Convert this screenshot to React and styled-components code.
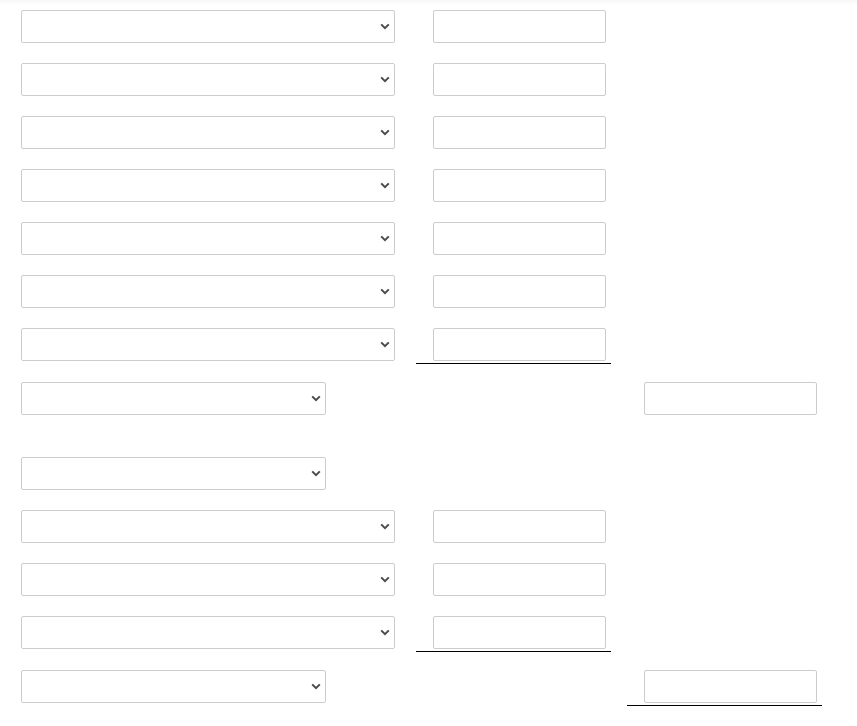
import React from "react";
import styled, { createGlobalStyle } from "styled-components";

const GlobalStyle = createGlobalStyle`
    html, body {
        margin: 0;
        background: #fff;
        font-family: "Liberation Sans", Arial, sans-serif;
    }
`;

const TopShade = styled.div`
    position: fixed;
    top: 0;
    left: 0;
    right: 0;
    height: 0;
    box-shadow: 0 0 5px 1px rgba(0, 0, 0, 0.1);
`;

const Form = styled.div`
    padding: 10px 0 0 4px;
`;

const Row = styled.div`
    display: grid;
    grid-template-columns: 396px 195px 195px;
    column-gap: 16px;
    align-items: start;
    margin-bottom: ${(props) => props.$after}px;

    &:last-child {
        margin-bottom: 0;
    }
`;

const Cell = styled.div`
    grid-column: ${(props) => props.$col};
    padding: 0 5px ${(props) => (props.$total ? "2px" : "0")} 17px;
    border-bottom: ${(props) => (props.$total ? "1px solid #000" : "none")};
    display: flex;
`;

const SelectWrap = styled.div`
    position: relative;
    width: ${(props) => (props.$short ? "305px" : "100%")};
    height: 33px;
`;

const Select = styled.select`
    box-sizing: border-box;
    appearance: none;
    -webkit-appearance: none;
    width: 100%;
    height: 33px;
    margin: 0;
    padding: 0 24px 0 8px;
    border: 1px solid #cccccc;
    border-radius: 2px;
    background: #fff;
    color: #444;
    font-family: "Liberation Sans", Arial, sans-serif;
    font-size: 14px;
`;

const Chevron = styled.svg`
    position: absolute;
    right: 5px;
    top: 13px;
    width: 10px;
    height: 7px;
    pointer-events: none;
`;

const Input = styled.input`
    box-sizing: border-box;
    width: 100%;
    height: 33px;
    margin: 0;
    padding: 0 8px;
    border: 1px solid #cccccc;
    border-radius: 2px;
    background: #fff;
    font-family: "Liberation Sans", Arial, sans-serif;
    font-size: 14px;
`;

const Dropdown = ({ short }) => (
    <SelectWrap $short={short}>
        <Select>
            <option value=""></option>
        </Select>
        <Chevron viewBox="0 0 10 7">
            <path
                d="M1.2 1.4 L5 5.2 L8.8 1.4"
                fill="none"
                stroke="#4a4a4a"
                strokeWidth="2"
            />
        </Chevron>
    </SelectWrap>
);

const rows = [
    { select: "long", input: 2 },
    { select: "long", input: 2 },
    { select: "long", input: 2 },
    { select: "long", input: 2 },
    { select: "long", input: 2 },
    { select: "long", input: 2 },
    { select: "long", input: 2, total: true },
    { select: "short", input: 3, after: 42 },
    { select: "short" },
    { select: "long", input: 2 },
    { select: "long", input: 2 },
    { select: "long", input: 2, total: true },
    { select: "short", input: 3, total: true },
];

export default function App() {
    return (
        <>
            <GlobalStyle />
            <TopShade />
            <Form>
                {rows.map((row, i) => (
                    <Row key={i} $after={row.after ?? (row.total ? 18 : 20)}>
                        <Cell $col={1}>
                            <Dropdown short={row.select === "short"} />
                        </Cell>
                        {row.input && (
                            <Cell $col={row.input} $total={row.total}>
                                <Input type="text" />
                            </Cell>
                        )}
                    </Row>
                ))}
            </Form>
        </>
    );
}
